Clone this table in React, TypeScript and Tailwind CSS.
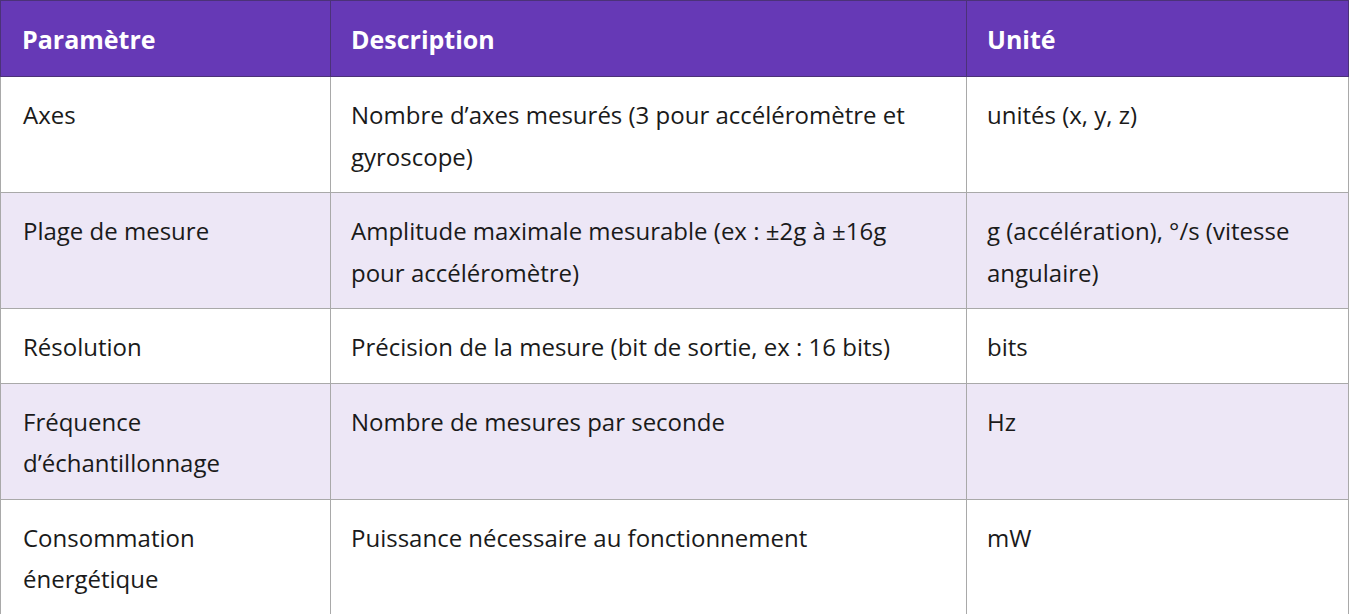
const rows = [
  ['Axes', 'Nombre d’axes mesurés (3 pour accéléromètre et gyroscope)', 'unités (x, y, z)'],
  ['Plage de mesure', 'Amplitude maximale mesurable (ex : ±2g à ±16g pour accéléromètre)', 'g (accélération), °/s (vitesse angulaire)'],
  ['Résolution', 'Précision de la mesure (bit de sortie, ex : 16 bits)', 'bits'],
  ['Fréquence d’échantillonnage', 'Nombre de mesures par seconde', 'Hz'],
  ['Consommation énergétique', 'Puissance nécessaire au fonctionnement', 'mW'],
];

export default function App() {
  return (
    <div className="w-[1349px] bg-white font-['Open_Sans','Noto_Sans',sans-serif]">
      <table className="w-full table-fixed border-collapse border border-[#a9a9a9]">
        <colgroup>
          <col className="w-[330px]" />
          <col className="w-[636px]" />
          <col />
        </colgroup>
        <thead>
          <tr className="h-[76px] bg-[#6639b6] text-white">
            <th className="border border-[#4b3278] px-[21px] pt-[2px] text-left text-[25px] font-bold">Paramètre</th>
            <th className="border border-[#4b3278] px-5 pt-[2px] text-left text-[25px] font-bold">Description</th>
            <th className="border border-[#4b3278] px-5 pt-[2px] text-left text-[25px] font-bold">Unité</th>
          </tr>
        </thead>
        <tbody>
          {rows.map((r, i) => (
            <tr key={i} className={i % 2 === 1 ? 'bg-[#ede7f6]' : 'bg-white'}>
              {r.map((c, j) => (
                <td
                  key={j}
                  className={`border border-[#a9a9a9] ${j === 0 ? 'pl-[22px] pr-5' : j === 1 ? 'pl-5 pr-7' : 'pl-5 pr-5'} pt-[17px] pb-[15px] align-top text-[24px] leading-[41.5px] text-[#1a1a1a]`}
                >
                  {c}
                </td>
              ))}
            </tr>
          ))}
        </tbody>
      </table>
    </div>
  );
}
